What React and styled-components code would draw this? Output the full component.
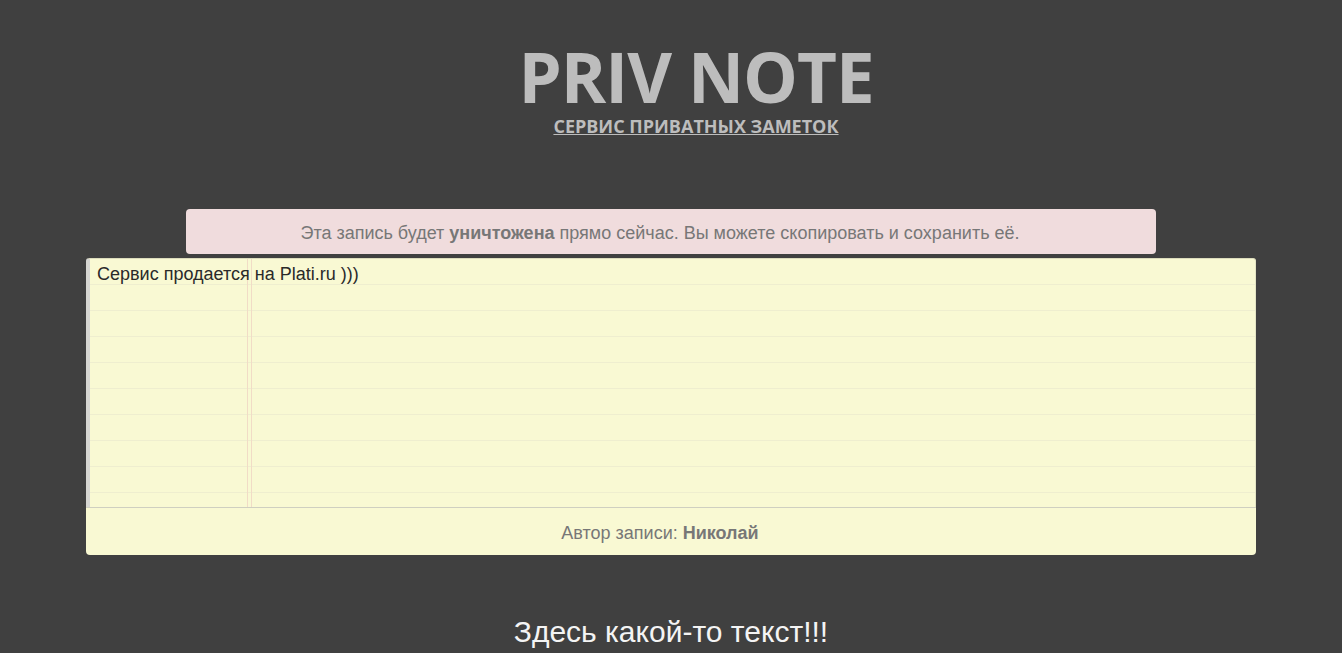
import styled, { createGlobalStyle } from "styled-components";

const GlobalStyle = createGlobalStyle`
  html, body {
    margin: 0;
    padding: 0;
    background: #404040;
  }
  body {
    font-family: "Liberation Sans", Arial, sans-serif;
  }
`;

const Page = styled.div`
  display: flex;
  flex-direction: column;
  align-items: center;
  padding-top: 38px;
`;

const Header = styled.header`
  display: flex;
  flex-direction: column;
  align-items: center;
  padding-left: 50px;
`;

const Logo = styled.h1`
  margin: 0 0 4px;
  padding-top: 4px;
  font-family: "Open Sans", sans-serif;
  font-weight: 700;
  font-size: 69px;
  line-height: 68px;
  color: #bdbdbd;
  letter-spacing: -1px;
`;

const Tagline = styled.a`
  font-family: "Open Sans", sans-serif;
  font-weight: 700;
  font-size: 18px;
  line-height: 24px;
  color: #bdbdbd;
  text-decoration: underline;
`;

const Warning = styled.div`
  margin-top: 71px;
  width: 970px;
  height: 45px;
  box-sizing: border-box;
  padding: 3px 22px 0 0;
  background: #f0dcdd;
  border-radius: 4px;
  display: flex;
  align-items: center;
  justify-content: center;
  font-size: 18px;
  line-height: 22px;
  color: #777;
`;

const Sheet = styled.div`
  margin-top: 4px;
  width: 1170px;
  display: flex;
  flex-direction: column;
`;

const Paper = styled.div`
  height: 249px;
  box-sizing: border-box;
  background-color: #f9f9d3;
  background-image:
    linear-gradient(to right, transparent 157px, #f1dcc6 157px, #f1dcc6 158px, transparent 158px, transparent 161px, #f1dcc6 161px, #f1dcc6 162px, transparent 162px),
    repeating-linear-gradient(to bottom, transparent 0, transparent 25px, #efeecf 25px, #efeecf 26px);
  border-left: 4px solid #d6d6d2;
  border-top: 1px solid #dcdcbc;
  border-right: 1px solid #e4e4c4;
  border-top-left-radius: 3px;
  border-top-right-radius: 3px;
  padding: 3px 7px;
  font-size: 18px;
  line-height: 25px;
  color: #2a2a2a;
`;

const Author = styled.div`
  height: 48px;
  background: #f9f9d3;
  border-top: 1px solid #cfcfc0;
  border-radius: 0 0 4px 4px;
  display: flex;
  align-items: center;
  justify-content: center;
  padding: 3px 22px 0 0;
  font-size: 18px;
  color: #777;
  box-sizing: border-box;
`;

const Footer = styled.h2`
  margin: 60px 0 0;
  font-weight: 400;
  font-size: 30px;
  color: #f4f4f4;
`;

export default function App() {
  return (
    <>
      <GlobalStyle />
      <Page>
        <Header>
          <Logo>PRIV NOTE</Logo>
          <Tagline href="#">СЕРВИС ПРИВАТНЫХ ЗАМЕТОК</Tagline>
        </Header>
        <Warning>
          <span>
            Эта запись будет <b>уничтожена</b> прямо сейчас. Вы можете скопировать и сохранить её.
          </span>
        </Warning>
        <Sheet>
          <Paper>Сервис продается на Plati.ru )))</Paper>
          <Author>
            <span>
              Автор записи: <b>Николай</b>
            </span>
          </Author>
        </Sheet>
        <Footer>Здесь какой-то текст!!!</Footer>
      </Page>
    </>
  );
}
